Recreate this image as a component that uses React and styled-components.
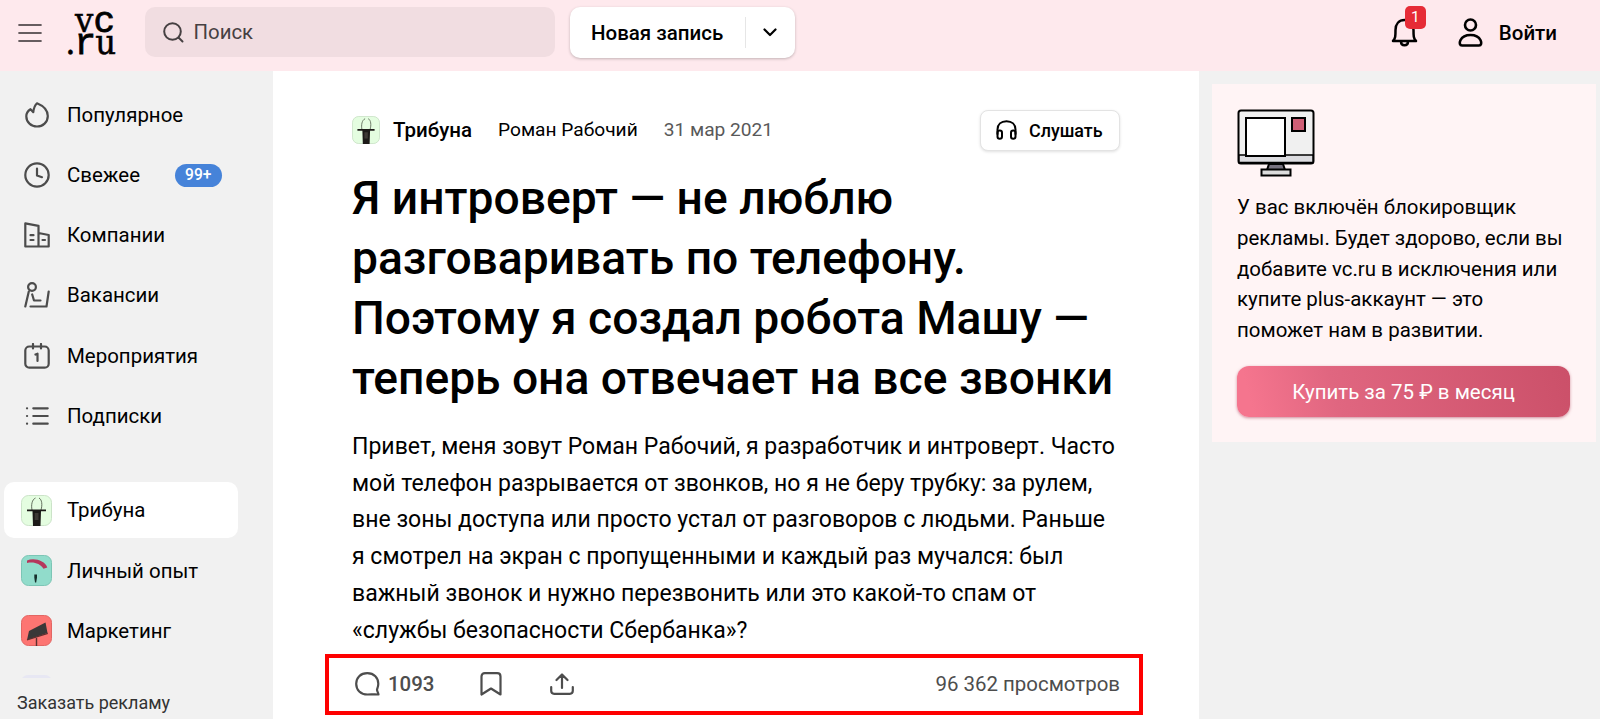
import React from 'react';
import styled, { createGlobalStyle } from 'styled-components';

const GlobalStyle = createGlobalStyle`
  * {
    box-sizing: border-box;
  }
  body {
    margin: 0;
    background: #f1f1f1;
    color: #000;
    font-family: Roboto, "Liberation Sans", sans-serif;
    overflow: hidden;
  }
  button {
    font-family: inherit;
    border: none;
    padding: 0;
    color: inherit;
  }
  svg {
    display: block;
    flex: none;
  }
  h1, p {
    margin: 0;
  }
`;

// layout
const Page = styled.div`
  height: 719px;
  display: flex;
  flex-direction: column;
`;

const Columns = styled.div`
  flex: 1;
  min-height: 0;
  display: flex;
`;

// header
const Header = styled.header`
  height: 71px;
  flex: none;
  background: #fee9ed;
  display: flex;
  align-items: flex-start;
  padding: 7px 43px 0 18px;
`;

const MenuButton = styled.button`
  height: 51px;
  background: none;
  display: flex;
  align-items: center;
`;

const Logo = styled.div`
  width: 47px;
  height: 51px;
  margin: 2px 0 0 26px;
  display: flex;
  flex-direction: column;
  align-items: flex-end;
  font-family: "DejaVu Serif", serif;
  font-stretch: condensed;
  font-size: 36px;
  line-height: 22px;
  white-space: nowrap;
  -webkit-text-stroke: 0.5px #000;
`;

const LogoLine = styled.span`
  height: 22px;
  letter-spacing: ${(props) => props.$spacing || '0'};
`;

const LogoMono = styled.span`
  font-family: "Liberation Mono", monospace;
  -webkit-text-stroke: 0.8px #000;
`;

const Search = styled.div`
  width: 410px;
  height: 50px;
  margin-left: 30px;
  padding-left: 18px;
  border-radius: 10px;
  background: #f1dde1;
  display: flex;
  align-items: center;
  gap: 9.5px;
  font-size: 20.4px;
  color: #464042;
`;

const NewEntry = styled.div`
  width: 225px;
  height: 51px;
  margin-left: 15px;
  border-radius: 10px;
  background: #fff;
  box-shadow: 0 1px 3px rgba(0, 0, 0, 0.24);
  display: flex;
  align-items: center;
`;

const NewEntryLabel = styled.button`
  width: 176px;
  padding-left: 21px;
  height: 31px;
  background: none;
  border-right: 1px solid #e6e6e6;
  font-size: 20.5px;
  font-weight: 500;
  text-align: left;
`;

const NewEntryToggle = styled.button`
  flex: 1;
  padding-right: 2px;
  background: none;
  display: flex;
  justify-content: center;
`;

const Bell = styled.div`
  position: relative;
  height: 51px;
  margin-left: auto;
  display: flex;
  align-items: center;
`;

const BellBadge = styled.span`
  position: absolute;
  left: 14px;
  top: -1px;
  width: 21px;
  height: 23px;
  border-radius: 5px;
  background: #e62b36;
  color: #fff;
  font-size: 15.5px;
  line-height: 23px;
  text-align: center;
`;

const Login = styled.button`
  height: 51px;
  margin-left: 40px;
  background: none;
  display: flex;
  align-items: center;
  gap: 16px;
  font-size: 20.5px;
  font-weight: 500;
`;

// sidebar
const Sidebar = styled.aside`
  width: 273px;
  flex: none;
  display: flex;
  flex-direction: column;
`;

const NavList = styled.nav`
  flex: 1;
  min-height: 0;
  overflow: hidden;
  padding: 16px 0 0 4px;
`;

const NavItem = styled.a`
  width: 234px;
  height: 56px;
  margin-bottom: 4.15px;
  padding-left: 17px;
  border-radius: 10px;
  background: ${(props) => (props.$active ? '#fff' : 'transparent')};
  opacity: ${(props) => (props.$faded ? 0.3 : 1)};
  display: flex;
  align-items: center;
  font-size: 20.45px;
  color: #000;
`;

const NavIcon = styled.span`
  width: 31px;
  margin-right: 15px;
  display: flex;
  justify-content: center;
  color: #4c4c4c;
`;

const NavCount = styled.span`
  height: 23px;
  margin-left: auto;
  margin-right: 16px;
  padding: 0 10.5px;
  border-radius: 12px;
  background: #4683d9;
  color: #fff;
  font-size: 15.6px;
  font-weight: 500;
  line-height: 23px;
`;

const NavGap = styled.div`
  height: 34.6px;
`;

const AdLink = styled.a`
  height: 41px;
  flex: none;
  padding: 15px 0 0 17px;
  font-size: 18px;
  line-height: 20px;
  color: #333;
`;

// article
const Article = styled.main`
  width: 926px;
  flex: none;
  background: #fff;
  display: flex;
  flex-direction: column;
  padding: 38px 0 0 52px;
`;

const Meta = styled.div`
  width: 768px;
  height: 41px;
  margin-left: 27px;
  display: flex;
  align-items: center;
  font-size: 19.15px;
`;

const Topic = styled.span`
  margin: 0 26px 0 13px;
  font-size: 20.5px;
  font-weight: 500;
`;

const PostDate = styled.span`
  margin-left: 26px;
  color: #595959;
`;

const Listen = styled.button`
  width: 140px;
  height: 41px;
  margin: 1px 0 0 auto;
  padding-left: 15px;
  border: 1px solid #e3e3e3;
  border-radius: 8px;
  background: #fff;
  box-shadow: 0 1px 3px rgba(0, 0, 0, 0.12);
  display: flex;
  align-items: center;
  gap: 12px;
  font-size: 17.9px;
  font-weight: 500;
`;

const Title = styled.h1`
  margin: 18px 0 0 27px;
  font-size: 46.2px;
  font-weight: 500;
  line-height: 60px;
  white-space: pre-line;
`;

const Lead = styled.p`
  margin: 20.6px 0 0 27px;
  font-size: 23.04px;
  line-height: 36.9px;
  white-space: pre-line;
`;

const Stats = styled.footer`
  width: 818px;
  height: 61px;
  margin-top: 4px;
  padding: 0 19px 1px 26px;
  border: 4px solid #fe0000;
  display: flex;
  align-items: center;
  font-size: 20.45px;
  color: #4d4d4d;
`;

const Comments = styled.span`
  width: 125px;
  display: flex;
  align-items: center;
  gap: 8px;
  font-weight: 500;
`;

const Bookmark = styled.span`
  width: 70px;
`;

const Views = styled.span`
  margin-left: auto;
`;

// promo
const Promo = styled.aside`
  width: 384px;
  height: 358px;
  margin: 13px 0 0 13px;
  padding: 25px 25px 0 25px;
  background: #fff4f5;
`;

const PromoText = styled.p`
  margin-top: 15px;
  font-size: 20.47px;
  line-height: 30.8px;
  white-space: pre-line;
`;

const BuyButton = styled.button`
  width: 333px;
  height: 51px;
  margin-top: 20px;
  padding-top: 1px;
  border-radius: 12px;
  background: linear-gradient(75deg, #f5758e 5%, #e06680 30%, #cb5069 100%);
  box-shadow: 0 1px 3px rgba(160, 40, 70, 0.5);
  color: #fff;
  font-size: 20.5px;
`;

const stroke = {
  fill: 'none',
  stroke: 'currentColor',
  strokeWidth: 2.2,
  strokeLinecap: 'round',
  strokeLinejoin: 'round',
};

const FlameIcon = () => (
  <svg width="26" height="26" viewBox="0 0 26 26" {...stroke}>
    <path d="M13 1.3C10.8 3.3 9.7 6.5 9.3 10.2L6.5 7.2C4 8.8 2.3 11.4 2.3 14.2C2.3 20.3 7.2 24.5 13 24.5S23.8 20.3 23.8 14C23.8 8 18.6 3.6 13 1.3Z" />
  </svg>
);

const ClockIcon = () => (
  <svg width="26" height="26" viewBox="0 0 26 26" {...stroke}>
    <circle cx="13" cy="13" r="11.7" />
    <path d="M13 6.5V13.5L18 15.2" />
  </svg>
);

const CompaniesIcon = () => (
  <svg width="26" height="26" viewBox="0 0 26 26" {...stroke}>
    <path d="M1.3 24.5V1.4L14.5 3.8V24.5ZM14.5 11L24.7 13V24.5H14.5M6.5 13.2H9.5M6.5 18H9.5M18.5 18H21" />
  </svg>
);

const JobsIcon = () => (
  <svg width="26" height="26" viewBox="0 0 26 26" {...stroke}>
    <circle cx="8" cy="5" r="3.9" />
    <path d="M4.8 9.5L1.3 24.5M8.2 12.5L10 18.5H16.5M6.5 24.5H22.5L24.7 9.5" />
  </svg>
);

const EventsIcon = () => (
  <svg width="26" height="26" viewBox="0 0 26 26" {...stroke}>
    <rect x="1.3" y="3.5" width="23.4" height="21.2" rx="4" />
    <path d="M9 1V5.5M17 1V5.5M11.5 11.5L13.5 10.7V18" />
  </svg>
);

const ListIcon = () => (
  <svg width="26" height="26" viewBox="0 0 26 26" {...stroke}>
    <path d="M9.3 5.3H23.7M9.3 13H23.7M9.3 20.7H23.7M3 5.3H3.1M3 13H3.1M3 20.7H3.1" />
  </svg>
);

const TribuneIcon = ({ size = 31 }) => (
  <svg width={size} height={size} viewBox="0 0 31 31">
    <rect x="0.5" y="0.5" width="30" height="30" rx="7" fill="#e4fde0" stroke="#cbe3c8" />
    <path d="M11 15C10 10 11 4.5 14.5 3M20 15C21.5 10 21 4.5 18 3" fill="none" stroke="#55604f" strokeWidth="0.9" />
    <path d="M6 14.5H25V16.2H20L19.5 31H12L11.5 16.2H6Z" fill="#1c1a18" />
    <path d="M13.7 18H17.5V25H13.7Z" fill="#3d3935" />
  </svg>
);

const PersonalIcon = () => (
  <svg width="31" height="31" viewBox="0 0 31 31">
    <rect x="0.5" y="0.5" width="30" height="30" rx="7" fill="#91dccb" stroke="#7cc5b5" />
    <path d="M6 5.5C13 2.5 24 5.5 26.3 12.5L22.5 13.8C19 8.5 13 6.5 6 8Z" fill="#b5375c" />
    <path d="M13.3 19.5H16V22.5L15.2 27.5H14L13.3 22.5Z" fill="#16302c" />
  </svg>
);

const MarketingIcon = () => (
  <svg width="31" height="31" viewBox="0 0 31 31">
    <rect x="0.5" y="0.5" width="30" height="30" rx="7" fill="#fd7572" stroke="#e26663" />
    <path d="M8 16L24.5 7.5L26.5 18L6 25Z" fill="#3a3838" />
    <path d="M6 24.8L26.8 18.3M15.5 23V31" stroke="#5c3030" strokeWidth="1.4" />
  </svg>
);

const NextTopicIcon = () => (
  <svg width="31" height="31" viewBox="0 0 31 31">
    <rect width="31" height="31" rx="7" fill="#d2d2fa" />
  </svg>
);

const MonitorIcon = () => (
  <svg width="78" height="68" viewBox="0 0 78 68" stroke="#000" strokeWidth="2">
    <rect x="1.5" y="1.5" width="75" height="53" rx="2.5" fill="#f0f0f0" />
    <path d="M2 46H76V53.5H2Z" fill="#dcdce0" strokeWidth="1.5" />
    <rect x="9" y="9" width="39" height="38" fill="#fff" />
    <rect x="55" y="9" width="13" height="13" fill="#cf5f76" />
    <path d="M32 55H46L48 61H30Z" fill="#77727f" />
    <rect x="24.5" y="60.5" width="29" height="6" fill="#dcdcdc" />
  </svg>
);

const mainNav = [
  { label: 'Популярное', icon: <FlameIcon /> },
  { label: 'Свежее', icon: <ClockIcon />, count: '99+' },
  { label: 'Компании', icon: <CompaniesIcon /> },
  { label: 'Вакансии', icon: <JobsIcon /> },
  { label: 'Мероприятия', icon: <EventsIcon /> },
  { label: 'Подписки', icon: <ListIcon /> },
];

const topics = [
  { label: 'Трибуна', icon: <TribuneIcon />, active: true },
  { label: 'Личный опыт', icon: <PersonalIcon /> },
  { label: 'Маркетинг', icon: <MarketingIcon /> },
];

const title = `Я интроверт — не люблю
разговаривать по телефону.
Поэтому я создал робота Машу —
теперь она отвечает на все звонки`;

const lead = `Привет, меня зовут Роман Рабочий, я разработчик и интроверт. Часто
мой телефон разрывается от звонков, но я не беру трубку: за рулем,
вне зоны доступа или просто устал от разговоров с людьми. Раньше
я смотрел на экран с пропущенными и каждый раз мучался: был
важный звонок и нужно перезвонить или это какой-то спам от
«службы безопасности Сбербанка»?`;

const promo = `У вас включён блокировщик
рекламы. Будет здорово, если вы
добавите vc.ru в исключения или
купите plus-аккаунт — это
поможет нам в развитии.`;

function TopBar() {
  return (
    <Header>
      <MenuButton>
        <svg width="24" height="20" viewBox="0 0 24 20" {...stroke} stroke="#665d5f">
          <path d="M1.2 2H22.8M1.2 10H22.8M1.2 18H22.8" />
        </svg>
      </MenuButton>
      <Logo>
        <LogoLine>v<LogoMono>c</LogoMono></LogoLine>
        <LogoLine $spacing="-1px">.<LogoMono>r</LogoMono>u</LogoLine>
      </Logo>
      <Search>
        <svg width="21" height="21" viewBox="0 0 21 21" {...stroke} strokeWidth="2">
          <circle cx="9.5" cy="9.5" r="8.3" />
          <path d="M15.5 15.5L19.5 19.5" />
        </svg>
        Поиск
      </Search>
      <NewEntry>
        <NewEntryLabel>Новая запись</NewEntryLabel>
        <NewEntryToggle>
          <svg width="14" height="9" viewBox="0 0 14 9" {...stroke}>
            <path d="M1.5 1.5L7 7L12.5 1.5" />
          </svg>
        </NewEntryToggle>
      </NewEntry>
      <Bell>
        <svg width="27" height="29" viewBox="0 0 27 29" {...stroke} strokeWidth="2.5">
          <path d="M2 23C4.5 20.5 4.5 18 4.5 12C4.5 6 8 2 13.5 2S22.5 6 22.5 12C22.5 18 22.5 20.5 25 23ZM10 23.5C10 28.5 17 28.5 17 23.5" />
        </svg>
        <BellBadge>1</BellBadge>
      </Bell>
      <Login>
        <svg width="25" height="29" viewBox="0 0 25 29" {...stroke} strokeWidth="2.6">
          <circle cx="12.5" cy="7" r="5.5" />
          <path d="M4 27.5H21C25.5 27.5 23.5 17 12.5 17S-0.5 27.5 4 27.5Z" />
        </svg>
        Войти
      </Login>
    </Header>
  );
}

function Menu() {
  return (
    <Sidebar>
      <NavList>
        {mainNav.map((item) => (
          <NavItem key={item.label}>
            <NavIcon>{item.icon}</NavIcon>
            {item.label}
            {item.count && <NavCount>{item.count}</NavCount>}
          </NavItem>
        ))}
        <NavGap />
        {topics.map((item) => (
          <NavItem key={item.label} $active={item.active}>
            <NavIcon>{item.icon}</NavIcon>
            {item.label}
          </NavItem>
        ))}
        <NavItem $faded>
          <NavIcon><NextTopicIcon /></NavIcon>
        </NavItem>
      </NavList>
      <AdLink>Заказать рекламу</AdLink>
    </Sidebar>
  );
}

export default function App() {
  return (
    <Page>
      <GlobalStyle />
      <TopBar />
      <Columns>
        <Menu />
        <Article>
          <Meta>
            <TribuneIcon size={28} />
            <Topic>Трибуна</Topic>
            <span>Роман Рабочий</span>
            <PostDate>31 мар 2021</PostDate>
            <Listen>
              <svg width="21" height="20" viewBox="0 0 21 20" {...stroke} strokeWidth="2">
                <path d="M1.5 14V9.5C1.5 4.5 5 1.2 10.5 1.2S19.5 4.5 19.5 9.5V14" />
                <rect x="1.5" y="10.5" width="4.5" height="8.3" rx="2.2" />
                <rect x="15" y="10.5" width="4.5" height="8.3" rx="2.2" />
              </svg>
              Слушать
            </Listen>
          </Meta>
          <Title>{title}</Title>
          <Lead>{lead}</Lead>
          <Stats>
            <Comments>
              <svg width="25" height="24" viewBox="0 0 25 24" {...stroke}>
                <path d="M23.5 22.5C19 22 17 22.5 12.5 22.5C5.5 22.5 1.2 18 1.2 11.8S5.5 1.2 12.3 1.2S23.3 5.8 23.3 11.8C23.3 14.5 22.5 16 22 17.5C22 19.5 23.3 20.5 23.5 22.5Z" />
              </svg>
              1093
            </Comments>
            <Bookmark>
              <svg width="22" height="24" viewBox="0 0 22 24" {...stroke}>
                <path d="M1.5 22.5V4.5C1.5 2.5 2.8 1.2 4.8 1.2H17.2C19.2 1.2 20.5 2.5 20.5 4.5V22.5L11 16.5Z" />
              </svg>
            </Bookmark>
            <svg width="24" height="22" viewBox="0 0 24 22" {...stroke}>
              <path d="M1.2 14V17.8C1.2 19.8 2.2 20.8 4.2 20.8H19.8C21.8 20.8 22.8 19.8 22.8 17.8V14M12 15V1.5M6.5 7L12 1.5L17.5 7" />
            </svg>
            <Views>96 362 просмотров</Views>
          </Stats>
        </Article>
        <Promo>
          <MonitorIcon />
          <PromoText>{promo}</PromoText>
          <BuyButton>Купить за 75 ₽ в месяц</BuyButton>
        </Promo>
      </Columns>
    </Page>
  );
}
